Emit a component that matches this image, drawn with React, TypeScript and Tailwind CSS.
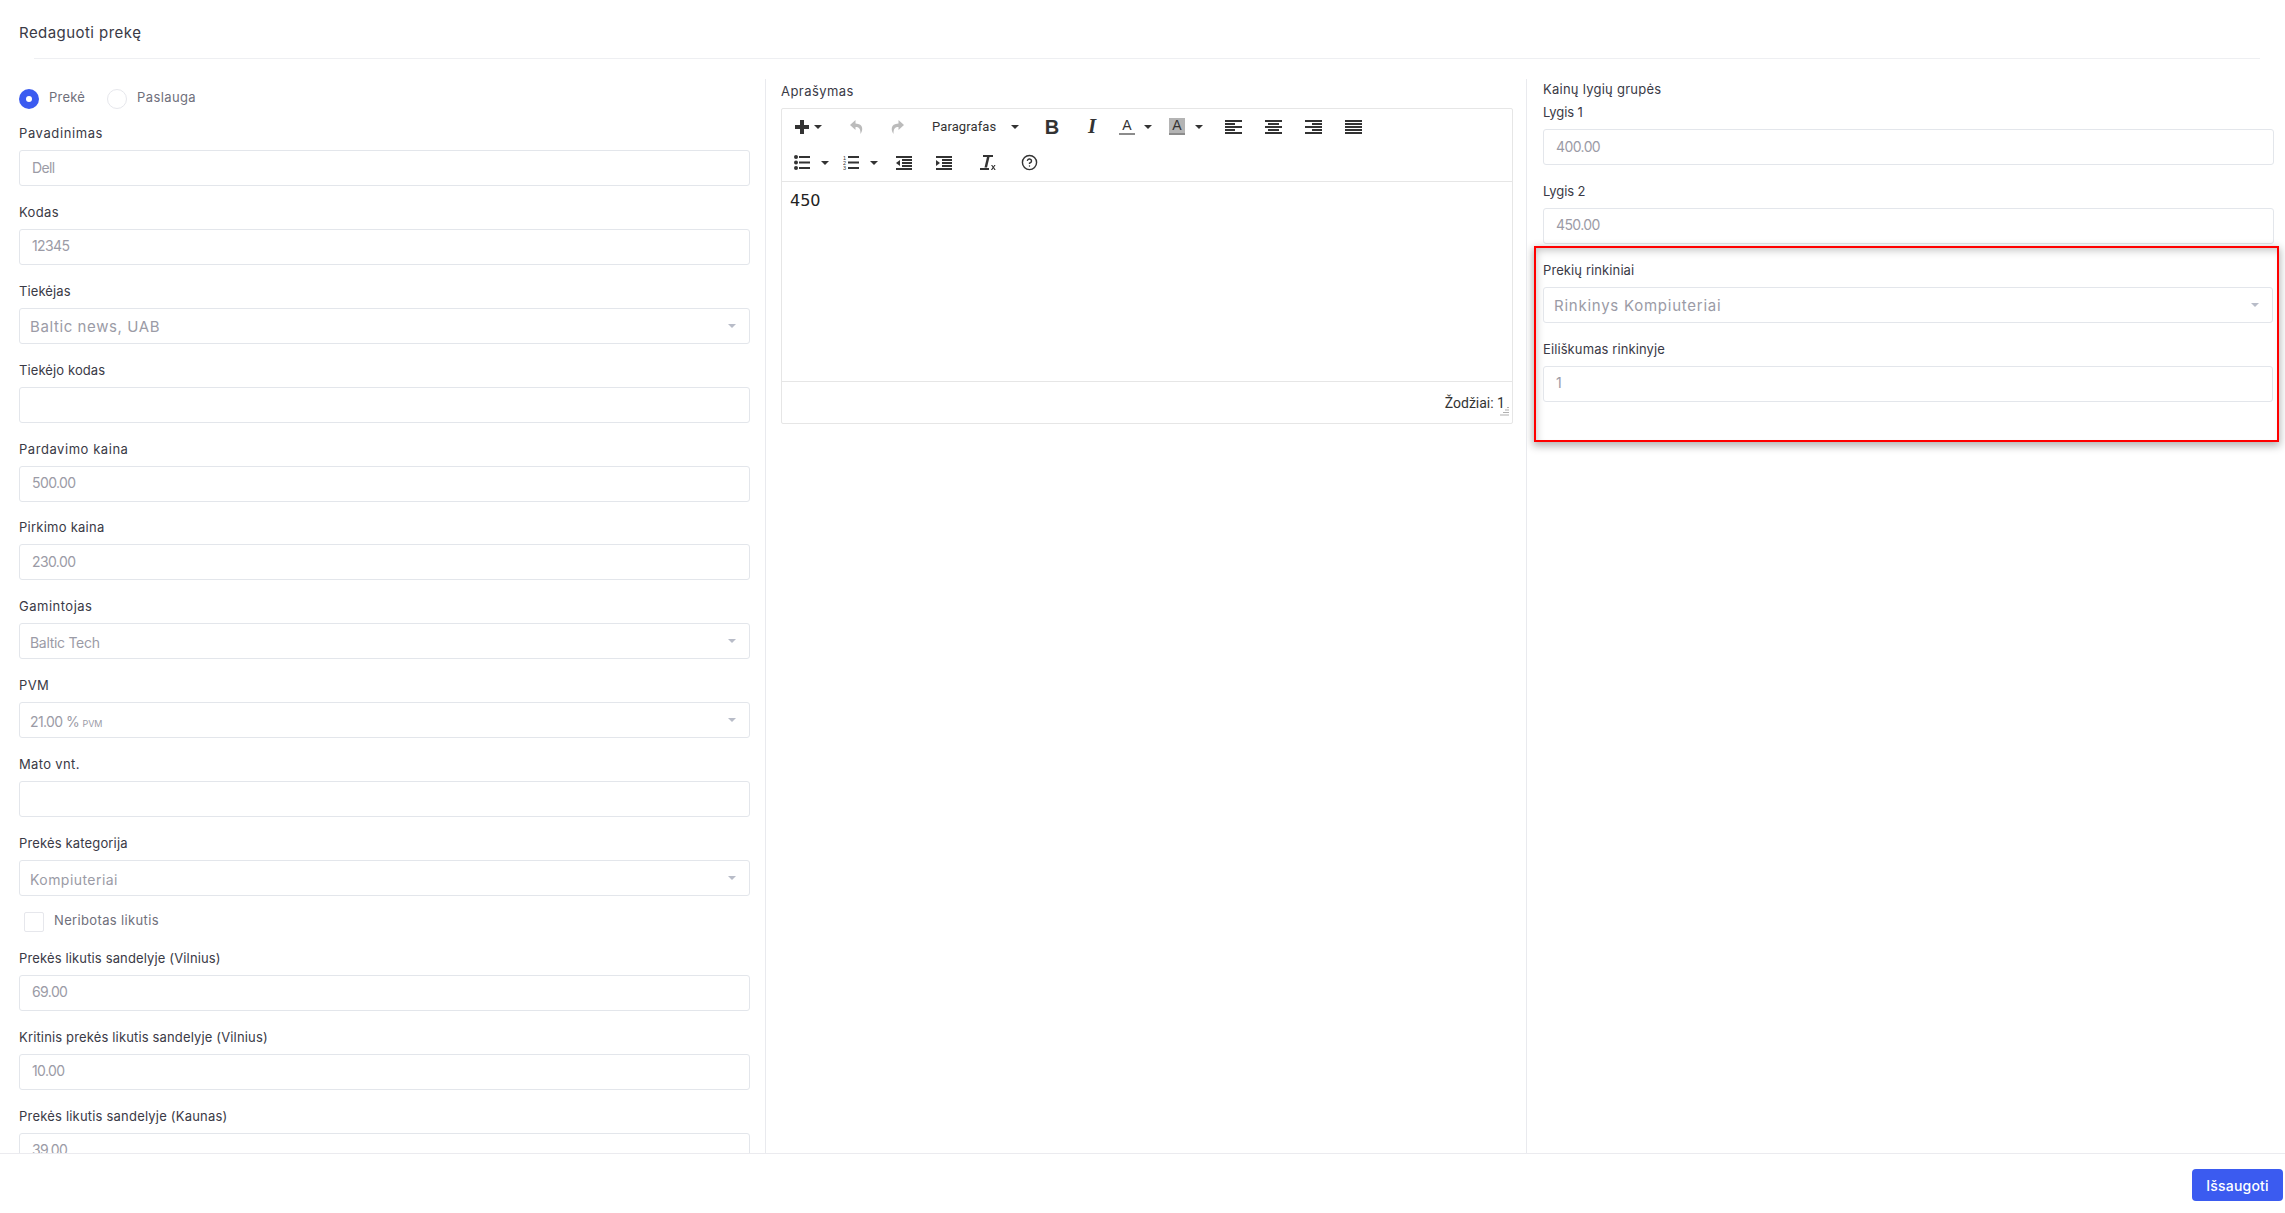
import React from "react";
import { CircleHelp } from "lucide-react";

type FieldProps = {
  label: string;
  value?: React.ReactNode;
  select?: boolean;
  labelClass?: string;
  valueClass?: string;
};

const Field = ({ label, value = "", select = false, labelClass = "tracking-[0.35px]", valueClass = "" }: FieldProps) => (
  <div className="mb-[16.9px]">
    <label className={`block h-5 mb-1.5 text-[13px] leading-[19px] text-[#3a3a46] whitespace-nowrap ${labelClass}`}>{label}</label>
    {select ? (
      <div className="flex items-center justify-between h-9 pl-[10px] pr-[13px] border border-[#e3e6eb] rounded-[3px] bg-white text-[14px] text-[#9b9ba6]">
        <span className={`pt-[2px] ${valueClass}`}>{value}</span>
        <span className="w-0 h-0 border-x-[4px] border-x-transparent border-t-[4px] border-t-[#b8bcc8]" />
      </div>
    ) : (
      <input
        readOnly
        value={value as string}
        className="block w-full h-9 px-3 pb-[2px] border border-[#e3e6eb] rounded-[3px] bg-white text-[14px] tracking-[-0.6px] text-[#9b9ba6] outline-none"
      />
    )}
  </div>
);

const Caret = () => <span className="block w-0 h-0 border-x-[4px] border-x-transparent border-t-[4px] border-t-[#333333]" />;

const Bars = ({ rows }: { rows: [number, number][] }) => (
  <svg width="17" height="14" viewBox="0 0 17 14" fill="#333333">
    {rows.map(([x, w], i) => (
      <rect key={i} x={x} y={i * 3} width={w} height="2" />
    ))}
  </svg>
);

const Btn = ({ className = "", children }: { className?: string; children: React.ReactNode }) => (
  <div className={`flex items-center h-[26px] ${className}`}>{children}</div>
);

const Toolbar = () => (
  <div className="h-[73px] border-b border-[#e6e6e6] pl-[4px] pt-[5px] text-[#333333]">
    <div className="flex items-center h-[25px]">
      <Btn className="w-[51px] pl-[9px] gap-[5px]">
        <svg width="14" height="14" viewBox="0 0 14 14" fill="#333333">
          <rect x="5" y="0" width="4" height="14" />
          <rect x="0" y="5" width="14" height="4" />
        </svg>
        <Caret />
      </Btn>
      <Btn className="w-10 justify-center">
        <svg width="14" height="14" viewBox="0 0 14 14" fill="#bbbbbb">
          <path d="M5.500 0 0 5l5.500 5V7c3.500 0 5 1.500 5 7 2.500-3.500 3.500-10-5-10.500z" />
        </svg>
      </Btn>
      <Btn className="w-10 justify-center">
        <svg width="14" height="14" viewBox="0 0 14 14" fill="#bbbbbb">
          <path d="M8.500 0 14 5l-5.500 5V7c-3.500 0-5 1.500-5 7-2.500-3.500-3.500-10 5-10.500z" />
        </svg>
      </Btn>
      <Btn className="w-[115px] pl-[15px] font-['Roboto',sans-serif] text-[13px] text-[#333333]">
        <span className="w-[79px] tracking-[0.1px]">Paragrafas</span>
        <Caret />
      </Btn>
      <Btn className="w-10 justify-center font-['Liberation_Sans',sans-serif] font-bold text-[20px]">B</Btn>
      <Btn className="w-10 justify-center font-['Liberation_Serif',serif] italic font-bold text-[21px]">I</Btn>
      <Btn className="w-[47px] pl-[7px]">
        <span className="flex justify-center w-4 h-[17px] border-b-[2px] border-[#8c8c8c] font-['Liberation_Sans',sans-serif] text-[14px] leading-[15px]">A</span>
        <span className="ml-[9px]"><Caret /></span>
      </Btn>
      <Btn className="w-[47px] pl-[10px]">
        <span className="flex justify-center w-4 h-[17px] bg-[#b4b4b4] border-b-[2px] border-[#8c8c8c] font-['Liberation_Sans',sans-serif] text-[14px] leading-[15px]">A</span>
        <span className="ml-[10px]"><Caret /></span>
      </Btn>
      <Btn className="w-[47px] pl-[19px]"><Bars rows={[[0, 17], [0, 10], [0, 17], [0, 10], [0, 17]]} /></Btn>
      <Btn className="w-10 pl-[12px]"><Bars rows={[[0, 17], [3, 11], [0, 17], [3, 11], [0, 17]]} /></Btn>
      <Btn className="w-10 pl-[12px]"><Bars rows={[[0, 17], [7, 10], [0, 17], [7, 10], [0, 17]]} /></Btn>
      <Btn className="w-10 pl-[12px]"><Bars rows={[[0, 17], [0, 17], [0, 17], [0, 17], [0, 17]]} /></Btn>
    </div>
    <div className="flex items-center h-[25px] mt-[11px]">
      <Btn className="w-[50px] pl-[8px]">
        <svg width="16" height="15" viewBox="0 0 16 15" fill="#333333">
          <circle cx="2" cy="2" r="2" />
          <circle cx="2" cy="7.500" r="2" />
          <circle cx="2" cy="13" r="2" />
          <rect x="5" y="1" width="11" height="2" />
          <rect x="5" y="6.500" width="11" height="2" />
          <rect x="5" y="12" width="11" height="2" />
        </svg>
        <span className="ml-[11px]"><Caret /></span>
      </Btn>
      <Btn className="w-[49px] pl-[7px]">
        <svg width="16" height="15" viewBox="0 0 16 15" fill="#333333">
          <text x="0" y="5" fontSize="5.500" fontFamily="Liberation Sans">1</text>
          <text x="0" y="10" fontSize="5.500" fontFamily="Liberation Sans">2</text>
          <text x="0" y="15" fontSize="5.500" fontFamily="Liberation Sans">3</text>
          <rect x="5" y="1" width="11" height="2" />
          <rect x="5" y="6.500" width="11" height="2" />
          <rect x="5" y="12" width="11" height="2" />
        </svg>
        <span className="ml-[11px]"><Caret /></span>
      </Btn>
      <Btn className="w-10 pl-[11px]">
        <svg width="16" height="14" viewBox="0 0 16 14" fill="#333333">
          <rect x="0" y="0" width="16" height="2" />
          <rect x="6" y="3" width="10" height="2" />
          <rect x="6" y="6" width="10" height="2" />
          <rect x="6" y="9" width="10" height="2" />
          <rect x="0" y="12" width="16" height="2" />
          <path d="M4 4v6L0 7z" />
        </svg>
      </Btn>
      <Btn className="w-[43px] pl-[11px]">
        <svg width="16" height="14" viewBox="0 0 16 14" fill="#333333">
          <rect x="0" y="0" width="16" height="2" />
          <rect x="6" y="3" width="10" height="2" />
          <rect x="6" y="6" width="10" height="2" />
          <rect x="6" y="9" width="10" height="2" />
          <rect x="0" y="12" width="16" height="2" />
          <path d="M0 4v6l4-3z" />
        </svg>
      </Btn>
      <Btn className="w-[43px] pl-[12px]">
        <svg width="16" height="15" viewBox="0 0 16 15" fill="#333333">
          <rect x="3" y="0" width="10" height="2" />
          <path d="M7 2h2.500L7 12.500H4.500z" />
          <rect x="0" y="13" width="9" height="2" />
          <path d="M11 10h1.300l1 1.500 1-1.500h1.300l-1.600 2.300 1.700 2.700h-1.300l-1.100-1.800-1.100 1.800h-1.300l1.700-2.700z" />
        </svg>
      </Btn>
      <Btn className="w-10 pl-[10px]">
        <CircleHelp size={17} strokeWidth={2} color="#333333" />
      </Btn>
    </div>
  </div>
);

const App = () => {
  return (
    <div className="flex flex-col h-[1213px] overflow-hidden bg-white font-['Inter',sans-serif]">
      <div className="flex flex-col flex-1 min-h-0">
        <h1 className="h-[58px] pl-[19px] pt-[22px] text-[15px] leading-[22px] tracking-[0.45px] font-normal text-[#3a3a46]">Redaguoti prekę</h1>
        <div className="h-px ml-[34px] mr-[25px] bg-[#eeeff2]" />
        <div className="grid grid-cols-[766px_761px_758px] flex-1 min-h-0 mt-[20px]">
          <div className="overflow-hidden border-r border-[#e9eaee] pl-[19px] pr-[15px] pt-[10px]">
            <div className="flex items-center h-5 mb-[15px] text-[13px] tracking-[0.2px] text-[#6f6f7b]">
              <span className="flex items-center justify-center w-5 h-5 rounded-full bg-[#3b5bf0]">
                <span className="w-[6px] h-[6px] rounded-full bg-white" />
              </span>
              <span className="ml-[10px] w-[58px] -mt-[2px]">Prekė</span>
              <span className="w-5 h-5 rounded-full border border-[#e6e7ec]" />
              <span className="ml-[10px] -mt-[2px] tracking-[0.4px]">Paslauga</span>
            </div>
            <Field label="Pavadinimas" value="Dell" labelClass="tracking-[0.6px]" />
            <Field label="Kodas" value="12345" />
            <Field label="Tiekėjas" value="Baltic news, UAB" select valueClass="text-[15px] tracking-[0.6px]" labelClass="tracking-[0.1px]" />
            <Field label="Tiekėjo kodas" labelClass="tracking-[0.1px]" />
            <Field label="Pardavimo kaina" value="500.00" labelClass="tracking-[0.55px]" />
            <Field label="Pirkimo kaina" value="230.00" labelClass="tracking-[0.25px]" />
            <Field label="Gamintojas" value="Baltic Tech" select valueClass="tracking-[-0.3px]" labelClass="tracking-[0.5px]" />
            <Field
              label="PVM"
              select
              value={
                <>
                  21.00 % <span className="text-[9px] tracking-normal">PVM</span>
                </>
              }
              valueClass="tracking-[-0.6px]"
            />
            <Field label="Mato vnt." />
            <Field label="Prekės kategorija" value="Kompiuteriai" select valueClass="tracking-[0.45px]" labelClass="tracking-[0.15px]" />
            <div className="flex items-start h-[37px] -mt-[1px] pl-[5px] text-[13px] tracking-[0.35px] text-[#6f6f7b]">
              <span className="w-5 h-5 rounded-[2px] border border-[#e6e7ec]" />
              <span className="ml-[10px] leading-[16px]">Neribotas likutis</span>
            </div>
            <Field label="Prekės likutis sandelyje (Vilnius)" value="69.00" labelClass="tracking-[0.14px]" />
            <Field label="Kritinis prekės likutis sandelyje (Vilnius)" value="10.00" labelClass="tracking-[0.15px]" />
            <Field label="Prekės likutis sandelyje (Kaunas)" value="39.00" labelClass="tracking-[0.2px]" />
          </div>

          <div className="overflow-hidden border-r border-[#e9eaee] pl-[15px] pr-[13px] pt-[3px]">
            <div className="h-5 mb-[6px] text-[13px] leading-[18px] tracking-[0.45px] text-[#3a3a46]">Aprašymas</div>
            <div className="h-[316px] flex flex-col border border-[#e6e6e6] rounded-[2px] bg-white">
              <Toolbar />
              <div className="flex-1 px-2 pt-[9px] font-['DejaVu_Sans',sans-serif] text-[16px] leading-[20px] text-[#222222]">450</div>
              <div className="relative flex items-center justify-end h-[42px] border-t border-[#e6e6e6] pr-[7px] pt-[2px] font-['Roboto',sans-serif] text-[14px] text-[#333333]">
                Žodžiai: 1
                <svg className="absolute right-[2px] bottom-[7px]" width="10" height="9" viewBox="0 0 10 9" fill="#b0b0b0">
                  <rect x="7" y="0" width="2" height="1" />
                  <rect x="5" y="2.500" width="4" height="1" />
                  <rect x="3" y="5" width="6" height="1" />
                  <rect x="0" y="7.500" width="9" height="1" />
                </svg>
              </div>
            </div>
          </div>

          <div className="overflow-hidden pl-[16px] pr-[11px] pt-[1px]">
            <div className="h-5 text-[13px] leading-[18px] tracking-[0.25px] text-[#3a3a46]">Kainų lygių grupės</div>
            <div className="mt-[3px]">
              <Field label="Lygis 1" value="400.00" labelClass="tracking-[-0.1px]" />
            </div>
            <div className="mt-[1px]">
              <Field label="Lygis 2" value="450.00" labelClass="tracking-[-0.1px]" />
            </div>
            <div className="h-[196px] -mt-[15px] -ml-[9px] -mr-[5px] border-[2px] border-[#ff0000] pl-[7px] pr-[4px] pt-[13px] shadow-[0_3px_8px_1px_rgba(0,0,0,0.3),inset_3px_5px_8px_-3px_rgba(0,0,0,0.25)]">
              <Field label="Prekių rinkiniai" value="Rinkinys Kompiuteriai" select valueClass="text-[15px] tracking-[0.75px]" labelClass="tracking-[0.1px]" />
              <Field label="Eiliškumas rinkinyje" value="1" labelClass="tracking-[0.1px]" />
            </div>
          </div>
        </div>
      </div>
      <div className="flex items-start justify-end h-[60px] border-t border-[#ebebef] pt-[15px] pr-[2px]">
        <button className="w-[91px] h-8 rounded-[4px] bg-[#3b5bf0] text-[14px] font-medium tracking-[0.2px] text-white">Išsaugoti</button>
      </div>
    </div>
  );
};

export default App;
